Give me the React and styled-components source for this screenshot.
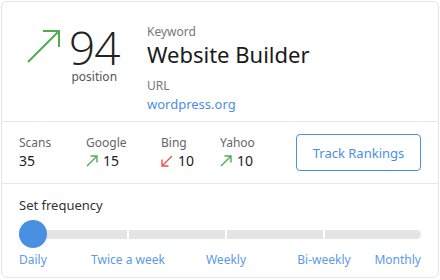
import styled, { createGlobalStyle } from "styled-components";

const GlobalStyle = createGlobalStyle`
  body {
    margin: 0;
    background: #ffffff;
    font-family: "Noto Sans", "Open Sans", sans-serif;
  }
`;

const Card = styled.div`
  box-sizing: border-box;
  width: 438px;
  height: 277px;
  margin: 1px;
  border: 1px solid #e4e4e4;
  border-radius: 6px;
  background: #fff;
  display: flex;
  flex-direction: column;
`;

const TopSection = styled.section`
  display: flex;
  height: 119px;
  border-bottom: 1px solid #e8e8e8;
  padding: 0 0 0 24px;
`;

const PositionBlock = styled.div`
  display: flex;
  align-items: flex-start;
  width: 121px;
  padding-top: 22px;
`;

const BigArrow = styled.svg`
  margin-top: 4px;
  margin-right: 8px;
`;

const PositionCol = styled.div`
  display: flex;
  flex-direction: column;
  align-items: center;
`;

const PositionNumber = styled.div`
  font-family: "Open Sans", "Noto Sans", sans-serif;
  font-size: 46px;
  font-weight: 300;
  line-height: 46px;
  color: #222;
  letter-spacing: -1px;
`;

const PositionLabel = styled.div`
  font-size: 12px;
  line-height: 14px;
  color: #555;
`;

const Details = styled.div`
  display: flex;
  flex-direction: column;
  padding-top: 22px;
`;

const Label = styled.div`
  font-size: 12px;
  line-height: 16px;
  color: #777;
`;

const KeywordText = styled.div`
  font-size: 22px;
  line-height: 28px;
  color: #1a1a1a;
  margin-bottom: 10px;
`;

const Link = styled.a`
  font-size: 13px;
  line-height: 20px;
  color: #4a90e2;
  text-decoration: none;
`;

const StatsSection = styled.section`
  display: flex;
  align-items: center;
  height: 61px;
  padding: 0 17px 0 17px;
  border-bottom: 1px solid #e8e8e8;
`;

const Stat = styled.div`
  display: flex;
  flex-direction: column;
  width: ${(p) => p.$w}px;
`;

const StatLabel = styled.div`
  font-size: 12px;
  line-height: 16px;
  color: #666;
`;

const StatValue = styled.div`
  display: flex;
  align-items: center;
  gap: 5px;
  font-size: 14px;
  line-height: 20px;
  color: #222;
`;

const TrackButton = styled.button`
  margin-left: auto;
  width: 125px;
  height: 37px;
  border: 1px solid #4a90e2;
  border-radius: 4px;
  background: #fff;
  color: #4a90e2;
  font-family: inherit;
  font-size: 13px;
`;

const FrequencySection = styled.section`
  padding: 12px 17px 0 17px;
`;

const FrequencyTitle = styled.div`
  font-size: 13px;
  line-height: 18px;
  color: #333;
`;

const Slider = styled.div`
  position: relative;
  margin-top: 6px;
  height: 28px;
  display: flex;
  align-items: center;
`;

const Track = styled.div`
  flex: 1;
  display: grid;
  grid-template-columns: 108px 1fr 1fr 1fr;
  gap: 2px;
`;

const Segment = styled.div`
  height: 9px;
  background: #e4e4e4;
  border-radius: ${(p) => (p.$first ? "5px 0 0 5px" : p.$last ? "0 5px 5px 0" : "0")};
`;

const Knob = styled.div`
  position: absolute;
  left: 0;
  top: 0;
  width: 28px;
  height: 28px;
  border-radius: 50%;
  background: #4a90e2;
`;

const Ticks = styled.div`
  display: grid;
  grid-template-columns: 60px 98px 98px 98px 48px;
  margin-top: 3px;
`;

const Tick = styled.div`
  font-size: 12px;
  line-height: 18px;
  color: #5a9ae6;
  text-align: ${(p) => p.$align};
  white-space: nowrap;
`;

function Arrow({ size, color, down }) {
  return (
    <svg width={size} height={size} viewBox="0 0 12 12" style={down ? { transform: "rotate(180deg)" } : undefined}>
      <path d="M1 11 L11 1 M4.5 1 H11 V7.5" fill="none" stroke={color} strokeWidth="1.4" />
    </svg>
  );
}

const stats = [
  { label: "Scans", value: "35", w: 67 },
  { label: "Google", value: "15", w: 75, dir: "up" },
  { label: "Bing", value: "10", w: 59, dir: "down" },
  { label: "Yahoo", value: "10", w: 60, dir: "up" },
];

const ticks = [
  { label: "Daily", align: "left" },
  { label: "Twice a week", align: "center" },
  { label: "Weekly", align: "center" },
  { label: "Bi-weekly", align: "center" },
  { label: "Monthly", align: "right" },
];

export default function App() {
  return (
    <>
      <GlobalStyle />
      <Card>
        <TopSection>
          <PositionBlock>
            <BigArrow width="35" height="35" viewBox="0 0 35 35">
              <path d="M2 34 L33 3 M17 3 H33 V19" fill="none" stroke="#4cae4f" strokeWidth="2" />
            </BigArrow>
            <PositionCol>
              <PositionNumber>94</PositionNumber>
              <PositionLabel>position</PositionLabel>
            </PositionCol>
          </PositionBlock>
          <Details>
            <Label>Keyword</Label>
            <KeywordText>Website Builder</KeywordText>
            <Label>URL</Label>
            <Link href="#">wordpress.org</Link>
          </Details>
        </TopSection>
        <StatsSection>
          {stats.map((s) => (
            <Stat key={s.label} $w={s.w}>
              <StatLabel>{s.label}</StatLabel>
              <StatValue>
                {s.dir && (
                  <Arrow size={12} color={s.dir === "up" ? "#4cae4f" : "#f0524f"} down={s.dir === "down"} />
                )}
                {s.value}
              </StatValue>
            </Stat>
          ))}
          <TrackButton>Track Rankings</TrackButton>
        </StatsSection>
        <FrequencySection>
          <FrequencyTitle>Set frequency</FrequencyTitle>
          <Slider>
            <Track>
              <Segment $first />
              <Segment />
              <Segment />
              <Segment $last />
            </Track>
            <Knob />
          </Slider>
          <Ticks>
            {ticks.map((t) => (
              <Tick key={t.label} $align={t.align}>
                {t.label}
              </Tick>
            ))}
          </Ticks>
        </FrequencySection>
      </Card>
    </>
  );
}
